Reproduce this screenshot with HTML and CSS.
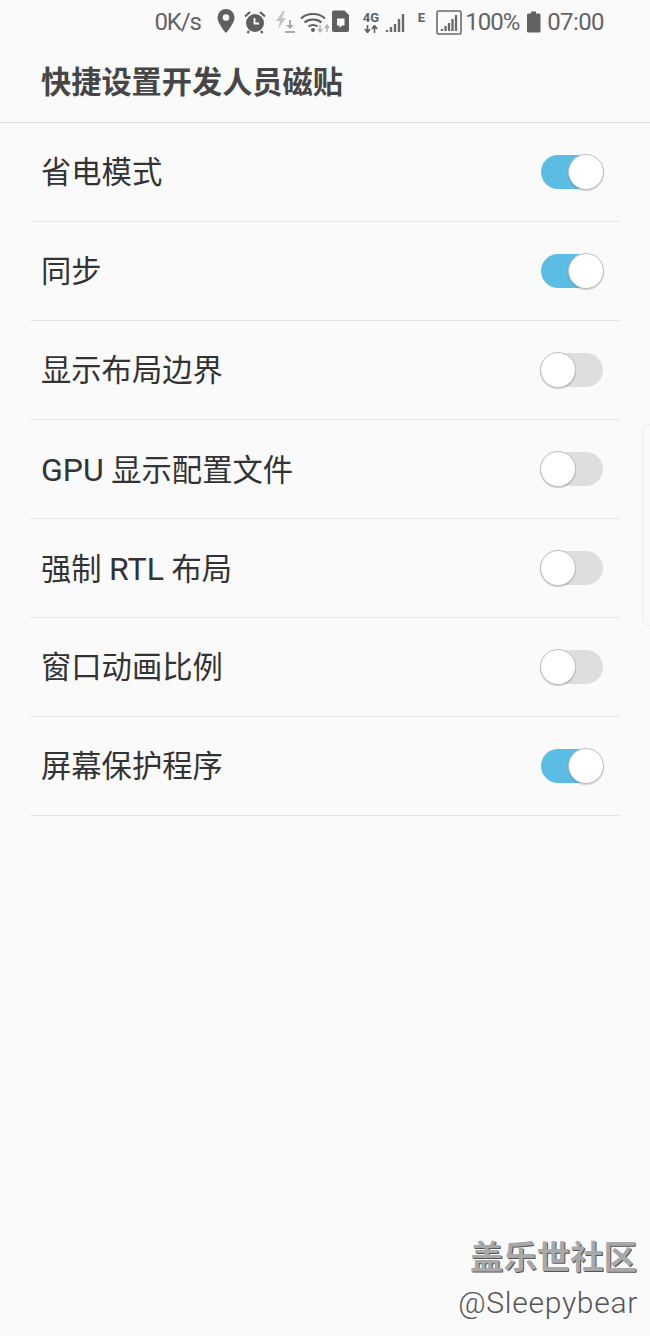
FILE: index.html
```html
<!DOCTYPE html>
<html lang="zh">
<head>
<meta charset="utf-8">
<title>快捷设置开发人员磁贴</title>
<link rel="stylesheet" href="styles.css">
</head>
<body>
<div class="screen">
  <div class="status">
    <span class="st st-speed">0K/s</span>
    <svg class="ic ic-pin" width="18" height="26" viewBox="0 0 18 26"><path fill-rule="evenodd" d="M9 1a8.500 8.500 0 0 0-8.500 8.500c0 6 8.500 15.500 8.500 15.500s8.500-9.500 8.500-15.500A8.500 8.500 0 0 0 9 1zm0 5.200a3.300 3.300 0 1 1 0 6.600 3.300 3.300 0 0 1 0-6.600z" fill="#5f5f5f"/></svg>
    <svg class="ic ic-alarm" width="22" height="24" viewBox="0 0 22 24"><circle cx="11" cy="13" r="9" fill="#5f5f5f"/><path d="M1 6.500 6 2M21 6.500 16 2M5 21l-1.500 2M17 21l1.500 2" stroke="#5f5f5f" stroke-width="2.200" fill="none"/><path d="M10.500 8v5.500H15" stroke="#fafafa" stroke-width="1.800" fill="none"/></svg>
    <svg class="ic ic-flash" width="20" height="24" viewBox="0 0 20 24"><path d="M8 1 1 11h4l-2 8 8-11H7l3-7z" fill="#c4c4c4"/><path d="M14 10v5h-3l4 4 4-4h-3v-5zM10 21h10v2H10z" fill="#ababab"/></svg>
    <svg class="ic ic-wifi" width="30" height="24" viewBox="0 0 30 24"><path d="M1 8.500c6-6 18-6 24 0M4.500 12.500c4.500-4 12.500-4 17 0M8.500 16.500c2.500-2 6.500-2 9 0" stroke="#5f5f5f" stroke-width="2.200" fill="none"/><circle cx="13" cy="20" r="2" fill="#5f5f5f"/><path d="M20 15v5M18 19l2 3 2-3M27 22v-6M25 18l2-3 2 3" stroke="#b5b5b5" stroke-width="1.500" fill="none"/></svg>
    <svg class="ic ic-sd" width="19" height="24" viewBox="0 0 19 24"><path fill-rule="evenodd" d="M3 1.500h10.500L18 6v15a2 2 0 0 1-2 2H3a2 2 0 0 1-2-2V3.500a2 2 0 0 1 2-2zm3 8v7h2.500V19l2.500-2.500h2.500v-7z" fill="#5f5f5f"/></svg>
    <span class="net-4g"><span class="tiny">4G</span><svg width="14" height="8" viewBox="0 0 14 8"><path d="M3.500 0v6M1 4l2.500 3.500L6 4M10.500 8V2M8 4l2.500-3.500L13 4" stroke="#5f5f5f" stroke-width="1.600" fill="none"/></svg></span>
    <svg class="ic ic-bars" width="21" height="22" viewBox="0 0 21 22"><path d="M2 18v2M6 15v5M10 12v8M14 7v13M18 2v18" stroke="#6a6a6a" stroke-width="2.400" fill="none"/></svg>
    <span class="tiny tiny-e">E</span>
    <svg class="ic ic-boxbars" width="26" height="25" viewBox="0 0 26 25"><rect x="1" y="1" width="24" height="23" rx="1.500" fill="none" stroke="#6a6a6a" stroke-width="1.600"/><path d="M6 19v2M9.500 16v5M13 13v8M16.500 9v12M20 5v16" stroke="#6a6a6a" stroke-width="2.300" fill="none"/></svg>
    <span class="st st-pct">100%</span>
    <svg class="ic ic-batt" width="16" height="24" viewBox="0 0 16 24"><path d="M5 1.500h5v2h3a1.500 1.500 0 0 1 1.500 1.500v16a1.500 1.500 0 0 1-1.500 1.500H2.500A1.500 1.500 0 0 1 1 21V5a1.500 1.500 0 0 1 1.500-1.500H5z" fill="#626262"/></svg>
    <span class="st st-time">07:00</span>
  </div>
  <header class="title-bar"><h1 class="title">快捷设置开发人员磁贴</h1></header>
  <ul class="list">
    <li class="row"><span class="label">省电模式</span><span class="toggle on"></span></li>
    <li class="row"><span class="label">同步</span><span class="toggle on"></span></li>
    <li class="row"><span class="label">显示布局边界</span><span class="toggle"></span></li>
    <li class="row"><span class="label"><span class="lat">GPU</span> 显示配置文件</span><span class="toggle"></span></li>
    <li class="row"><span class="label">强制 <span class="lat">RTL</span> 布局</span><span class="toggle"></span></li>
    <li class="row"><span class="label">窗口动画比例</span><span class="toggle"></span></li>
    <li class="row"><span class="label">屏幕保护程序</span><span class="toggle on"></span></li>
  </ul>
  <div class="edge-handle"></div>
  <div class="watermark">
    <div class="wm-cn">盖乐世社区</div>
    <div class="wm-en">@Sleepybear</div>
  </div>
</div>
</body>
</html>
```
FILE: styles.css
```css
*, *::before, *::after { box-sizing: border-box; }
html, body { margin: 0; padding: 0; }
body { background: #fafafa; font-family: "Roboto", "Noto Sans CJK SC", sans-serif; color: #333; }
.screen { position: relative; width: 650px; height: 1336px; overflow: hidden; background: #fafafa; }

.status { height: 44px; display: flex; align-items: center; justify-content: flex-end; padding-right: 46px; color: #666; }
.st { font-size: 24px; line-height: 44px; color: #646464; }
.st-speed { letter-spacing: -1.1px; margin-right: 16px; }
.st-pct { letter-spacing: -1px; margin-left: 3px; }
.st-time { letter-spacing: -0.6px; margin-left: 5px; }
.ic { flex: none; display: block; }
.ic-pin { margin-right: 9px; margin-bottom: 2px; }
.ic-alarm { margin-right: 9px; margin-bottom: 1px; }
.ic-flash { margin-right: 5px; }
.ic-wifi { margin-right: 1px; margin-bottom: 1px; }
.ic-sd { margin-right: 12px; margin-bottom: 2px; }
.ic-batt { margin-left: 7px; }
.net-4g { display: flex; flex-direction: column; align-items: center; width: 18px; margin-right: 5px; gap: 1px; }
.tiny { font-size: 13px; line-height: 12px; font-weight: 700; color: #5f5f5f; }
.tiny-e { margin: 0 11px 8px 12px; }
.ic-bars { margin-top: 2px; }

.title-bar { height: 79px; display: flex; align-items: center; padding: 0 0 1px 41px; border-bottom: 1px solid #dcdcdc; }
.title { margin: 0; font-size: 30.2px; line-height: 40px; font-weight: 700; color: #464646; }

.list { list-style: none; margin: 0; padding: 0 31px 0 30px; }
.row { height: 99px; display: flex; align-items: center; justify-content: space-between; padding: 0 15px 0 11px; border-bottom: 1px solid #e5e5e5; }
.label { font-size: 30.3px; line-height: 40px; color: #333; margin-top: 2px; }
.lat { font-size: 32px; }

.toggle { position: relative; width: 64px; height: 34px; flex: none; display: block; }
.toggle::before { content: ""; position: absolute; left: 1px; right: 1px; top: 0; bottom: 0; border-radius: 17px; background: #dedede; }
.toggle::after { content: ""; position: absolute; left: 0; top: -1px; width: 36px; height: 36px; border-radius: 50%; background: #fff; border: 1px solid #bdbdbd; box-shadow: 0 1px 1px rgba(0,0,0,.18); }
.toggle.on::before { background: #5bbde4; }
.toggle.on::after { left: 28px; }

.edge-handle { position: absolute; right: -6px; top: 424px; width: 14px; height: 202px; border: 1px solid #ececec; border-radius: 8px; }

.watermark { position: absolute; right: 12px; top: 1238px; text-align: right; }
.wm-cn { font-size: 33.400px; line-height: 40px; font-weight: 700; color: #a8a8a8; text-shadow: 1px 1px 0 #555; margin-right: 1px; }
.wm-en { font-size: 30px; line-height: 44px; font-weight: 300; color: #555; letter-spacing: 0.7px; margin-top: 3px; }
```
